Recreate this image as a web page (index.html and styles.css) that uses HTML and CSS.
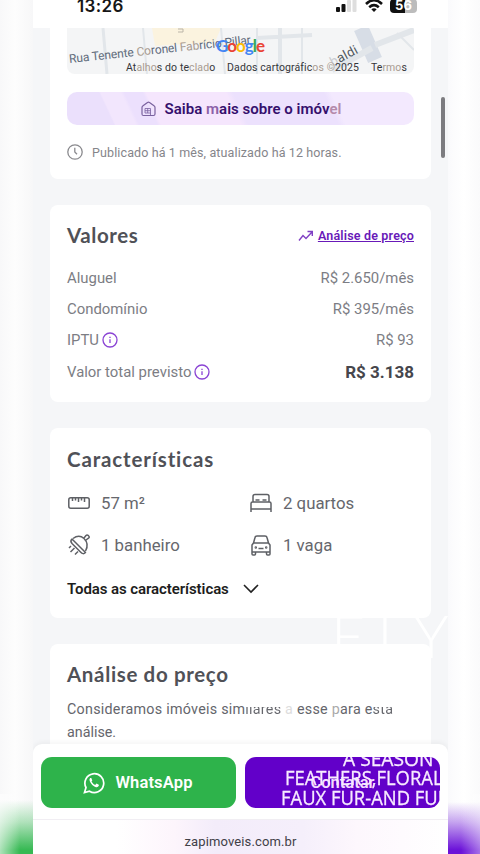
FILE: index.html
```html
<!DOCTYPE html>
<html lang="pt-BR">
<head>
<meta charset="utf-8">
<meta name="viewport" content="width=device-width, initial-scale=1">
<title>Imóvel</title>
<link rel="stylesheet" href="styles.css">
</head>
<body>
<div class="stage">
  <div class="side side-left"></div>
  <main class="phone">
    <header class="status">
      <span class="time">13:26</span>
      <span class="signals">
        <svg width="22" height="14" viewBox="0 0 22 14"><rect x="0" y="8" width="4" height="5" rx="1" fill="#111"/><rect x="5.5" y="5" width="4" height="8" rx="1" fill="#111"/><rect x="11" y="1" width="4" height="12" rx="1" fill="#dedede"/><rect x="16.500" y="-2" width="4" height="15" rx="1" fill="#dedede"/></svg>
        <svg width="18" height="14" viewBox="0 0 18 14"><g fill="none" stroke="#111" stroke-width="2.6"><path d="M1 5Q9-2.500 17 5"/><path d="M4.200 8.200Q9 4 13.800 8.200"/></g><path d="M6.300 10.300Q9 8 11.700 10.300L9 13Z" fill="#111"/></svg>
        <span class="battery">56</span>
      </span>
    </header>
    <section class="content">
      <article class="card card-map">
        <div class="map">
          <svg class="map-art" width="347" height="46" viewBox="0 0 347 46">
            <rect width="347" height="46" fill="#f4f5f6"/>
            <path d="M85 0H154L148 14L88 18Z" fill="#fbf3df"/>
            <g fill="none" stroke="#e2e6ea">
              <path d="M36 0L40 46" stroke-width="3"/><path d="M76 0L80 46M154 0L158 46M190 0V46M235 0V46" stroke-width="2"/>
              <path d="M213 0V46M190 10L245 7" stroke-width="4"/>
              <path d="M294 0L308 32" stroke-width="15" stroke="#d7dde6"/>
              <path d="M308 17L347 2M265 42L305 20" stroke-width="6"/><path d="M330 5L347 22" stroke-width="2"/>
            </g>
            <path d="M111 1H116V4H111" fill="none" stroke="#bbb5a8"/>
          </svg>
          <span class="street">Rua Tenente <i>Co</i>ronel <i>Fab</i>rício Pillar</span>
          <span class="street2"><i class="faded">b</i>aldi</span>
          <span class="google"><b class="g-blue">G</b><b class="g-red">o</b><b class="g-yellow">o</b><b class="g-blue">g</b><b class="g-green">l</b><b class="g-red">e</b></span>
          <div class="map-links"><span>At<i>alho</i>s do te<i>clad</i>o</span><span class="link-data">Dados cartográfic<i>os ©</i>2025</span><span class="link-terms">Te<i>rmo</i>s</span></div>
        </div>
        <div class="more">
          <svg width="15" height="16" viewBox="0 0 15 16" fill="none" stroke="#79619e" stroke-width="1.200"><path d="M1 6.500Q1 5.500 2 4.800L6.500 1.400Q7.500.8 8.500 1.400L13 4.800Q14 5.500 14 6.500V13Q14 14.500 12.500 14.500H2.500Q1 14.500 1 13Z"/><path d="M4 12V7.500H9.500V14M6.700 7.500V12M4 9.700H9.500M4 12H9.500" stroke-width=".8"/></svg>
          <span>Saiba <i class="m1">m</i>ais sobre o imóv<i class="m2">el</i></span>
        </div>
        <div class="published">
          <svg width="16" height="16" viewBox="0 0 16 16" fill="none" stroke="#8a8a8e" stroke-width="1.300"><circle cx="8" cy="8" r="7.200"/><path d="M7.800 3.800V8L10 10.200"/></svg>
          <span>Publicado há 1 mês, atualizado há 12 horas.</span>
        </div>
      </article>

      <article class="card card-values">
        <div class="head"><h2 class="t-values">Valores</h2>
          <span class="analysis"><svg width="16" height="12" viewBox="0 0 16 12" fill="none" stroke="#8040c4" stroke-width="1.400"><path d="M1 10.500L5 5.500L8 8.500L14 2M9.500 1.500H14.300V6"/></svg><u>Análise de preço</u></span>
        </div>
        <div class="row"><span>Aluguel</span><span>R$ 2.650/mês</span></div>
        <div class="row"><span>Condomínio</span><span>R$ 395/mês</span></div>
        <div class="row"><span class="info">IPTU<svg width="16" height="16" viewBox="0 0 16 16" fill="none" stroke="#8a43d4" stroke-width="1.300"><circle cx="8" cy="8" r="7"/><path d="M8 7.200V11M8 4.700V6"/></svg></span><span>R$ 93</span></div>
        <div class="row row-total"><span class="info">Valor total previsto<svg width="16" height="16" viewBox="0 0 16 16" fill="none" stroke="#8a43d4" stroke-width="1.300"><circle cx="8" cy="8" r="7"/><path d="M8 7.200V11M8 4.700V6"/></svg></span><strong>R$ 3.138</strong></div>
      </article>

      <article class="card card-features">
        <h2 class="t-features">Características</h2>
        <div class="features">
          <span class="feature"><svg width="24" height="24" viewBox="0 0 24 24"><rect x="1.800" y="6.800" width="20.400" height="10.400" rx="2"/><path d="M5.500 7V10M8.500 7V9.500M11.500 7V11M14.500 7V9.500M17.500 7V11"/></svg>57 m²</span>
          <span class="feature"><svg width="24" height="24" viewBox="0 0 24 24"><path d="M2 21V12.500Q2 11 3.500 11H20.500Q22 11 22 12.500V21M2 18H22M4 11V5.500Q4 3.500 6 3.500H18Q20 3.500 20 5.500V11M6.500 9H10.500M13.500 9H17.500"/></svg>2 quartos</span>
          <span class="feature"><svg width="24" height="24" viewBox="0 0 24 24"><path d="M5 6L18.500 19.500Q16 22 13.500 19L5 10.500Q2.800 8 5 6ZM6 5.500Q12 1 17 5.500Q22.500 11 18.500 18M17 5L19 2.600Q20 1.500 21.500 2.700Q23 4 21.500 5.200L19 7M4 13L2 15M7.500 15L3.500 19M11 18.500L8 21.500"/></svg>1 banheiro</span>
          <span class="feature"><svg width="24" height="24" viewBox="0 0 24 24"><path d="M4.500 10L6 4.500Q6.300 3 8 3H16Q17.700 3 18 4.500L19.500 10L21 12V21Q21 22 20 22H18.500Q17.500 22 17.500 21V19H6.500V21Q6.500 22 5.500 22H4Q3 22 3 21V12ZM4.500 10H19.500M3 19H21M9.500 15.500H14.500"/><circle cx="6.800" cy="14.500" r=".5"/><circle cx="17.200" cy="14.500" r=".5"/></svg>1 vaga</span>
        </div>
        <div class="all"><span>Todas as características</span><svg width="16" height="10" viewBox="0 0 16 10" fill="none" stroke="#222" stroke-width="1.600"><path d="M1 1L8 8L15 1"/></svg></div>
      </article>

      <article class="card card-price">
        <h2 class="t-price">Análise do preço</h2>
        <p><span class="line">Consideramos imóveis sim<span class="worn">ilares</span> <span class="ghost">a</span> esse <span class="pale">p</span>ara e<span class="worn">sta</span></span><br>análise.</p>
      </article>
      <span class="scrollbar"></span>
      <span class="watermark">ELY</span>
    </section>

    <footer class="footer">
      <div class="actions">
        <div class="btn whats"><svg width="22" height="22" viewBox="0 0 22 22" fill="none" stroke="#fff" stroke-width="1.700"><path d="M1.500 20.500L3 15.500A9.400 9.400 0 1 1 6.500 19.200Z"/><path d="M7.200 6Q6 7.200 6.700 9Q8.700 13.700 13 15.200Q15 15.600 15.800 13.800V12.800L13.500 11.600L12.200 13Q9.800 12 8.500 9.600L9.300 8.400L8.300 6Z" fill="#fff" stroke="none"/></svg><span>WhatsApp</span></div>
        <div class="btn contact"><span class="contact-label">Contatar</span>
          <span class="season s1">A SEASON</span><span class="season s2">FEATHERS,FLORAL</span><span class="season s3">FAUX FUR-AND FUN</span>
        </div>
      </div>
      <div class="url">zapimoveis.com.br</div>
    </footer>
  </main>
  <div class="side side-right"></div>
</div>
</body>
</html>
```
FILE: styles.css
```css
* { box-sizing: border-box; }
body { margin: 0; background: #fff; font-family: Roboto, sans-serif; }
svg { display: block; flex: none; }
i { font-style: normal; }
.stage { display: grid; grid-template-columns: 33px 415px 32px; width: 480px; height: 854px; overflow: hidden; }
.side-left { background: linear-gradient(90deg, #fff9, #fff0 60%) 0 100% / 33px 60px no-repeat, linear-gradient(#36b95300 800px, #36b95360 822px, #36b953 850px), linear-gradient(90deg, #f8f8f9, #fdfdfd 45%, #f7f7f8); }
.side-right { background: linear-gradient(270deg, #fff6, #fff0 60%) 0 100% / 32px 60px no-repeat, linear-gradient(#6b12d800 802px, #6b12d860 822px, #6b12d8 850px), linear-gradient(90deg, #fafafc, #fff 50%, #fafafb); }
.phone { display: flex; flex-direction: column; height: 854px; background: #f5f6f8; overflow: hidden; }
.status { height: 28px; flex: none; background: #fff; display: flex; justify-content: space-between; padding: 0 31px 0 44px; }
.time { font: 600 17px/20px Inter, sans-serif; letter-spacing: .4px; margin-top: -4px; color: #161616; }
.signals { display: flex; gap: 7px; height: 14px; margin-top: -1px; }
.battery { width: 27px; height: 14px; border-radius: 4px; background: linear-gradient(90deg, #111 56%, #bcbcbc 56%); color: #fff; font: 700 13px/13px Inter, sans-serif; text-align: center; }
.content { position: relative; height: 716px; flex: none; padding: 0 17px; display: flex; flex-direction: column; gap: 26px; overflow: hidden; }
.card { flex: none; background: #fff; border-radius: 8px; padding: 0 17px; }
.card-map { height: 151px; border-radius: 0 0 8px 8px; }
.map { position: relative; width: 347px; height: 46px; border-radius: 0 0 8px 8px; overflow: hidden; color: #34363a; }
.map-art { filter: blur(.7px); }
.map i { color: #a89b90; }
.map i.faded { color: #c8cbd0; }
.street { position: absolute; left: 2px; top: 24px; font-size: 12px; line-height: 14px; white-space: nowrap; letter-spacing: -.1px; color: #606b7b; transform: rotate(-6deg); transform-origin: 0 50%; }
.street2 { position: absolute; left: 262px; top: 21px; font-size: 13px; line-height: 14px; letter-spacing: .4px; color: #515860; transform: rotate(-28deg); }
.google { position: absolute; left: 149px; top: 8px; font: 17px/20px Lato, sans-serif; letter-spacing: -1px; }
.google b { font-weight: 700; }
.g-blue { color: #4285f4; } .g-red { color: #ea4335; } .g-yellow { color: #fbbc05; } .g-green { color: #34a853; }
.map-links { position: absolute; inset: 33px 7px 0 59px; display: flex; justify-content: space-between; font-size: 10.500px; line-height: 14px; letter-spacing: .1px; white-space: nowrap; }
.more { display: flex; align-items: center; justify-content: center; gap: 9px; height: 33px; margin-top: 18px; border-radius: 10px; background: linear-gradient(65deg, #ebe0fc 13%, #f2e6fd 13.500% 19%, #ece0fd 20% 25%, #f5e6fd 26% 48%, #ece1fd 50% 75%, #f3e9fe 77%); color: #35106d; font-weight: 600; font-size: 15px; letter-spacing: .02px; }
.more svg { margin-left: 1px; }
.m1 { color: #8c62a9; } .m2 { color: #b58bab; }
.published { display: flex; align-items: center; gap: 9px; height: 18px; margin-top: 18px; color: #85858a; font-size: 12.500px; letter-spacing: .12px; }
.card-values { height: 197px; padding-top: 15px; }
.head { display: flex; justify-content: space-between; align-items: center; height: 31px; margin-bottom: 11px; }
h2 { margin: 0; font: 700 20.500px/30px Lato, sans-serif; color: #505157; white-space: nowrap; }
.t-values { letter-spacing: .6px; margin-top: -1px; }
.analysis { display: flex; align-items: center; gap: 4px; color: #6819b8; font-weight: 600; font-size: 12.500px; letter-spacing: .18px; }
.analysis u { text-underline-offset: 1px; }
.row { display: flex; justify-content: space-between; align-items: center; height: 31px; font-size: 14.900px; color: #7c7d84; }
.row-total { height: 34px; }
.row strong { font-size: 17px; font-weight: 700; color: #46464c; }
.info { display: flex; align-items: center; gap: 3px; }
.card-features { height: 190px; padding-top: 16px; }
.t-features { letter-spacing: .85px; }
.features { display: grid; grid-template-columns: 182px 1fr; grid-template-rows: 42px 42px; align-items: center; margin-top: 8px; }
.feature { display: flex; align-items: center; gap: 10px; font-size: 16.800px; color: #66676d; }
.feature svg { fill: none; stroke: #5e6065; stroke-width: 1.500; stroke-linejoin: round; }
.all { display: flex; align-items: center; gap: 14px; margin-top: 10px; height: 26px; font-size: 15px; font-weight: 600; color: #1d1d20; }
.all span { letter-spacing: -.08px; }
.card-price { height: 110px; padding-top: 15px; }
.t-price { letter-spacing: .65px; }
.card-price p { margin: 9px 0 0; font-size: 14.300px; line-height: 23px; color: #65666c; white-space: nowrap; }
.line { letter-spacing: .26px; }
.worn { background: linear-gradient(#fff 36%, #65666c 40%); background-clip: text; color: transparent; }
.ghost { color: #ddd; } .pale { color: #aaa; }
.scrollbar { position: absolute; left: 408px; top: 69px; width: 4px; height: 61px; border-radius: 2px; background: #7c7c80; }
.watermark { position: absolute; left: 298px; top: 574px; font: 300 59px/68px Lato, sans-serif; letter-spacing: 12px; color: #fff; }
.footer { position: relative; flex: none; height: 110px; background: #fff; border-radius: 9px 9px 0 0; box-shadow: 0 -2px 5px #0000000b; }
.actions { display: flex; gap: 9px; height: 76px; padding: 13px 8px; border-bottom: 1px solid #f1eef3; }
.btn { position: relative; display: flex; align-items: center; justify-content: center; height: 51px; width: 195px; border-radius: 11px; color: #fff; font-size: 16.500px; font-weight: 600; overflow: hidden; }
.whats { background: #2eb34b; gap: 10px; }
.whats svg { margin-left: -1px; }
.whats span { letter-spacing: .15px; }
.contact { background: #6200c9; }
.contact-label { color: #f3dcff; }
.season { position: absolute; font: 400 20px/22px "Open Sans", sans-serif; white-space: nowrap; color: #f8eaff; -webkit-text-stroke: .3px #f8eaff; transform-origin: 0 0; transform: scaleX(.96); }
.s1 { left: 98px; top: -9px; }
.s2 { left: 40px; top: 10px; transform: scaleX(.92); }
.s3 { left: 36px; top: 30px; transform: scaleX(.92); }
.url { height: 34px; padding-top: 5px; text-align: center; font-size: 13px; line-height: 34px; letter-spacing: .12px; color: #414047; background: linear-gradient(90deg, #fff 20%, #fdf5fc 34%, #f3ecfa 44%, #f5effb 65%, #fdf7fd 78%, #fff); }
```
